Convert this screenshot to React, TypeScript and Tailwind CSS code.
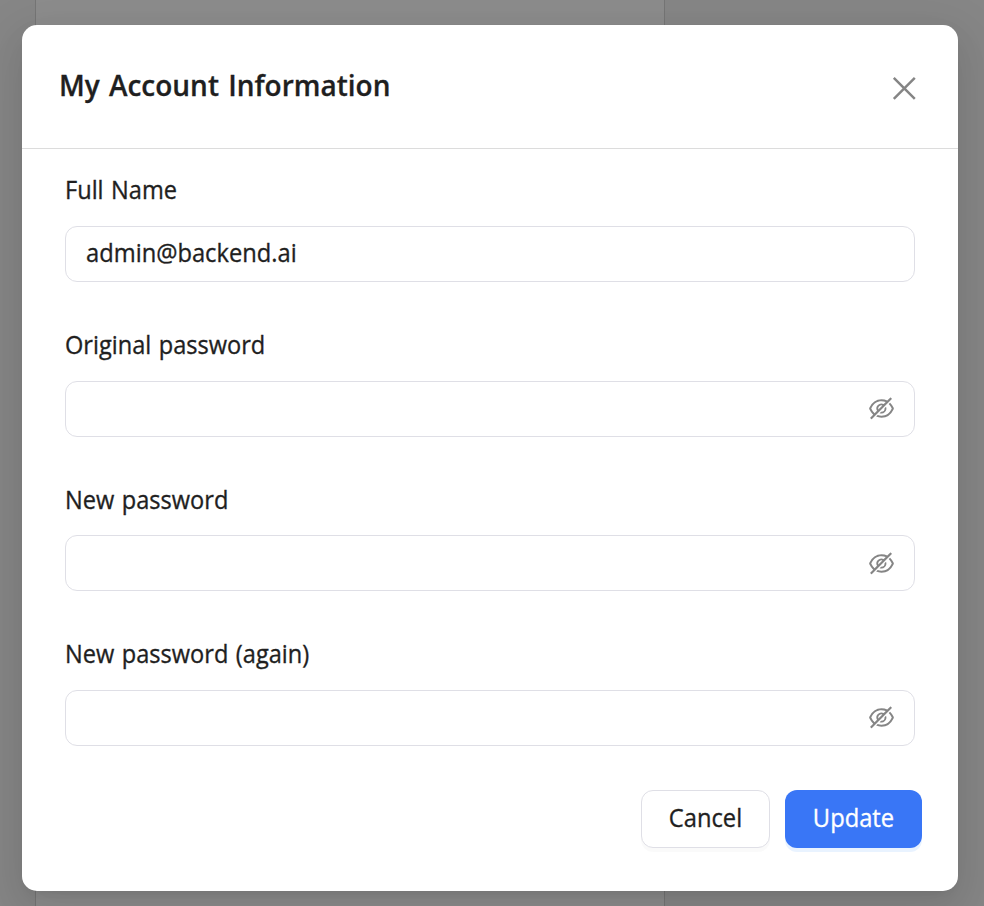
import { AiOutlineEyeInvisible } from "react-icons/ai";

function Label({ text }: { text: string }) {
  return (
    <span className="block h-9 origin-left scale-x-[0.925] text-[25.5px] leading-9 [-webkit-text-stroke:0.35px] [word-spacing:1.5px]">
      {text}
    </span>
  );
}

function PasswordField({
  label,
  className,
  boxClass = "mt-[19px]",
  iconClass = "mb-px",
}: {
  label: string;
  className: string;
  boxClass?: string;
  iconClass?: string;
}) {
  return (
    <label className={`block ${className}`}>
      <Label text={label} />
      <span className={`flex h-14 items-center rounded-[12px] border border-[#dfdfe6] bg-white pl-5 pr-[18px] ${boxClass}`}>
        <input type="password" className="h-full min-w-0 flex-1 outline-none" />
        <AiOutlineEyeInvisible className={`size-[29px] text-[#858585] ${iconClass}`} />
      </span>
    </label>
  );
}

export default function App() {
  return (
    <div className="relative h-[906px] w-[984px] overflow-hidden bg-[#868686] font-['Open_Sans','Noto_Sans',sans-serif] text-[#1f1f1f]">
      <div className="flex h-full">
        <div className="w-9 border-r border-[#757575]" />
        <div className="w-[629px] border-r border-[#757575] bg-[#8c8c8c]" />
      </div>
      <div className="absolute left-[22px] top-[25px] flex h-[866px] w-[936px] flex-col rounded-[15px] bg-white shadow-[0_12px_32px_rgba(0,0,0,0.08),0_6px_12px_-8px_rgba(0,0,0,0.12),0_18px_56px_16px_rgba(0,0,0,0.05)]">
        <header className="flex h-[124px] shrink-0 items-center justify-between border-b border-[#dcdcdc] pl-[37px] pr-[42px]">
          <h1 className="-mt-1 origin-left scale-x-[0.965] text-[29px] font-semibold leading-10 [-webkit-text-stroke:0.3px] [word-spacing:2px]">
            My Account Information
          </h1>
          <button aria-label="Close" className="mt-[3px]">
            <svg width="24" height="24" viewBox="0 0 24 24" fill="none" stroke="#858585" strokeWidth="2.5">
              <path d="M1.8 1.8 22.8 22.8M22.8 1.8 1.8 22.8" />
            </svg>
          </button>
        </header>
        <main className="px-[43px] pt-[22px]">
          <label className="block">
            <Label text="Full Name" />
            <span className="mt-[19px] block h-14 rounded-[12px] border border-[#dfdfe6] bg-white px-5">
              <input
                defaultValue="admin@backend.ai"
                className="block h-full w-full origin-left scale-x-[0.93] bg-transparent pb-1 text-[25.5px] outline-none [-webkit-text-stroke:0.35px]"
              />
            </span>
          </label>
          <PasswordField label="Original password" className="mt-[44px]" />
          <PasswordField label="New password" className="mt-[44px]" boxClass="mt-[18px]" iconClass="mt-px" />
          <PasswordField label="New password (again)" className="mt-[44px]" />
        </main>
        <footer className="mt-11 flex justify-end gap-[15px] pr-9 text-[25.5px] [-webkit-text-stroke:0.35px]">
          <button className="h-[58px] w-[129px] rounded-[12px] border border-[#dfdfe6] bg-white pb-1 shadow-[0_4px_0_rgba(0,0,0,0.02)]">
            <span className="block scale-x-[0.93]">Cancel</span>
          </button>
          <button className="h-[58px] w-[137px] rounded-[12px] bg-[#3976f6] pb-1 text-white shadow-[0_4px_0_#e9f3ff]">
            <span className="block scale-x-[0.93]">Update</span>
          </button>
        </footer>
      </div>
    </div>
  );
}
